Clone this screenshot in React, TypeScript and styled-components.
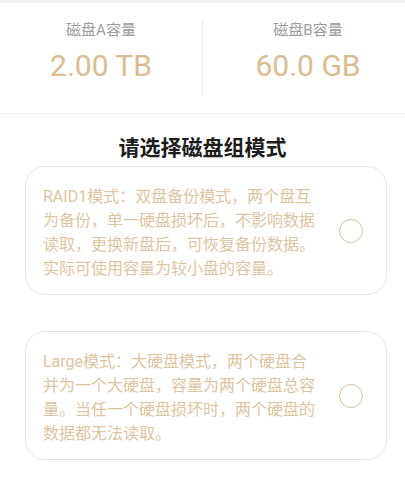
import React from "react";
import styled, { createGlobalStyle } from "styled-components";

const Global = createGlobalStyle`
  html, body { margin: 0; padding: 0; background: #ffffff; }
  body { font-family: Roboto, "Noto Sans CJK SC", sans-serif; }
  * { box-sizing: border-box; }
`;

const Page = styled.div`
  width: 405px;
  min-height: 478px;
  background: #fff;
  border-top: 3px solid #f3f3f3;
`;

const Header = styled.div`
  display: grid;
  grid-template-columns: 1fr 1px 1fr;
  align-items: start;
  padding: 17px 0 18px;
  border-bottom: 1px solid #ededed;
`;

const Stat = styled.div<{ $shift?: number }>`
  display: flex;
  flex-direction: column;
  align-items: center;
  gap: 8px;
  padding-left: ${(p) => p.$shift ?? 0}px;
`;

const StatLabel = styled.div`
  font-size: 15px;
  line-height: 20px;
  color: #9d9d9d;
`;

const StatValue = styled.div`
  font-size: 30px;
  line-height: 36px;
  color: #dbbd92;
`;

const Divider = styled.div`
  width: 1px;
  height: 75px;
  background: #eeeeee;
`;

const Title = styled.h2`
  margin: 20px 0 4px;
  text-align: center;
  font-size: 21px;
  line-height: 28px;
  font-weight: 700;
  color: #1c1c1c;
`;

const List = styled.div`
  display: flex;
  flex-direction: column;
  gap: 36px;
  margin: 0 18px 0 25px;
`;

const Card = styled.div`
  display: flex;
  align-items: center;
  justify-content: space-between;
  height: 129px;
  padding: 4px 23px 0 17px;
  border: 1px solid #e9e6e1;
  border-radius: 20px;
  background: #fff;
`;

const CardText = styled.div`
  width: 285px;
  font-size: 16px;
  line-height: 24px;
  color: #dcc6a4;
`;

const Line = styled.span`
  display: block;
  white-space: nowrap;
`;

const Radio = styled.div`
  width: 24px;
  height: 24px;
  border-radius: 50%;
  border: 1.5px solid #d8c09b;
  flex-shrink: 0;
  margin-top: -4px;
`;

const modes = [
  [
    "RAID1模式：双盘备份模式，两个盘互",
    "为备份，单一硬盘损坏后，不影响数据",
    "读取，更换新盘后，可恢复备份数据。",
    "实际可使用容量为较小盘的容量。",
  ],
  [
    "Large模式：大硬盘模式，两个硬盘合",
    "并为一个大硬盘，容量为两个硬盘总容",
    "量。当任一个硬盘损坏时，两个硬盘的",
    "数据都无法读取。",
  ],
];

export default function App() {
  return (
    <>
      <Global />
      <Page>
        <Header>
          <Stat $shift={0}>
            <StatLabel>磁盘A容量</StatLabel>
            <StatValue>2.00 TB</StatValue>
          </Stat>
          <Divider />
          <Stat $shift={8}>
            <StatLabel>磁盘B容量</StatLabel>
            <StatValue>60.0 GB</StatValue>
          </Stat>
        </Header>
        <Title>请选择磁盘组模式</Title>
        <List>
          {modes.map((lines, i) => (
            <Card key={i}>
              <CardText>
                {lines.map((l, j) => (
                  <Line key={j}>{l}</Line>
                ))}
              </CardText>
              <Radio />
            </Card>
          ))}
        </List>
      </Page>
    </>
  );
}
